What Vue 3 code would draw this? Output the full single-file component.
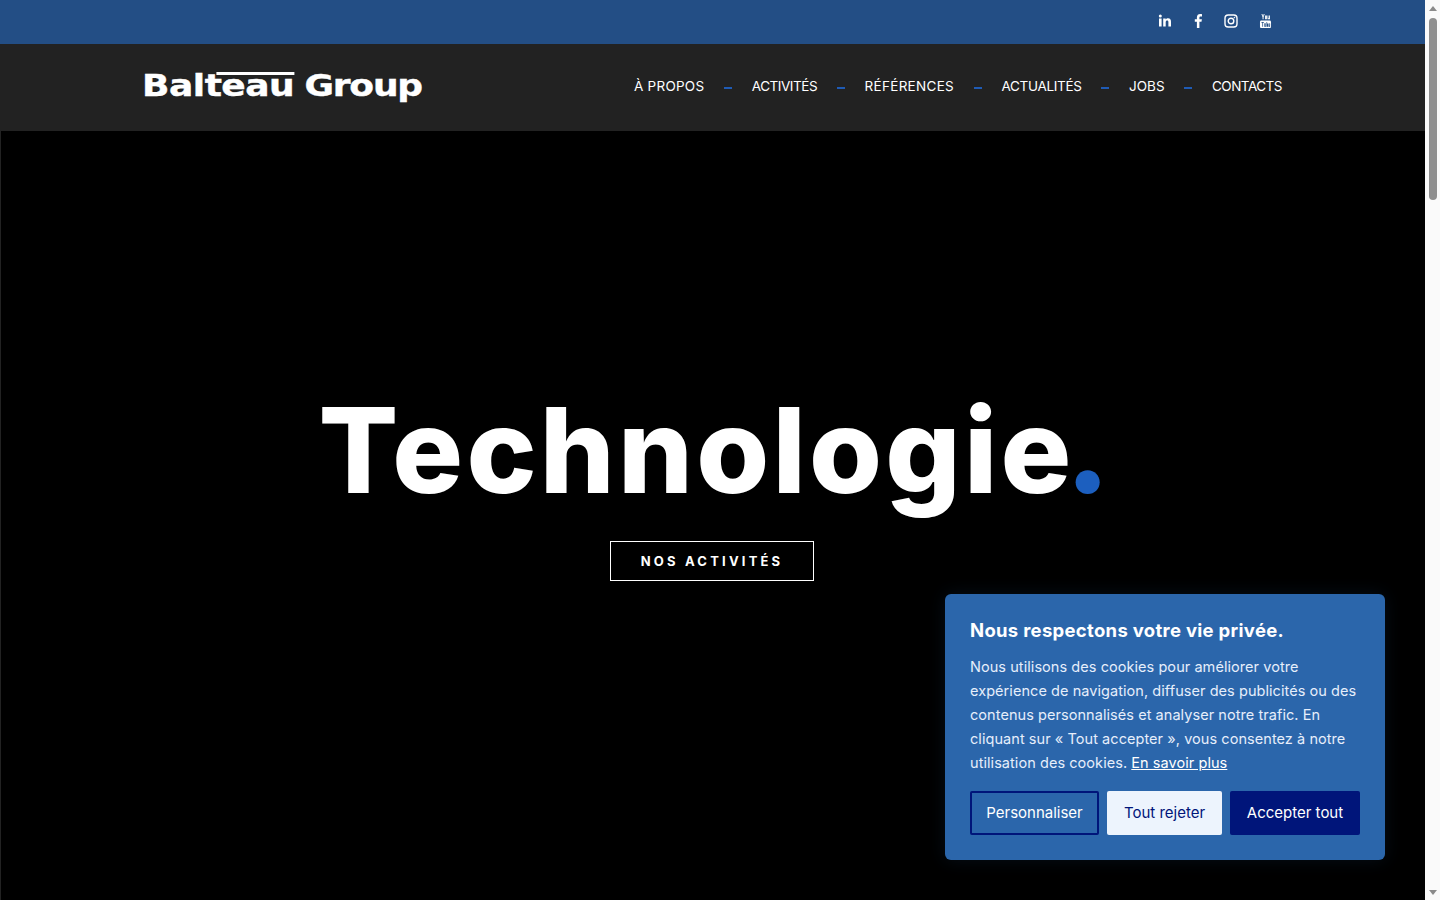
<script setup>
const nav = [
  { label: 'À PROPOS', ls: 0.25 },
  { label: 'ACTIVITÉS', ls: -0.45 },
  { label: 'RÉFÉRENCES', ls: 0.3 },
  { label: 'ACTUALITÉS', ls: -0.3 },
  { label: 'JOBS', ls: 0 },
  { label: 'CONTACTS', ls: -0.5 }
]
</script>

<template>
  <div class="page">
    <main class="main">
      <div class="topbar">
        <div class="socials">
          <svg class="ico" viewBox="0 0 16 16" fill="#fff"><rect x="2" y="5.5" width="2.6" height="8"/><circle cx="3.3" cy="3" r="1.5"/><path d="M6.2 5.5h2.5v1.1c.5-.8 1.4-1.3 2.4-1.3 2.1 0 2.9 1.3 2.9 3.4v4.8h-2.6V9.2c0-1-.3-1.7-1.2-1.7-1 0-1.5.7-1.5 1.7v4.3H6.2z"/></svg>
          <svg class="ico" viewBox="0 0 16 16" fill="#fff"><path d="M9.4 15V8.7h2.1l.4-2.5H9.4V4.7c0-.7.3-1.2 1.3-1.2H12V1.2C11.700 1.100 11 1 10.200 1 8.300 1 6.900 2.200 6.900 4.400v1.800H4.800v2.500h2.100V15z"/></svg>
          <svg class="ico" viewBox="0 0 16 16" fill="none" stroke="#fff" stroke-width="1.400"><rect x="2" y="2" width="12" height="12" rx="3.200"/><circle cx="8" cy="8" r="2.800"/><circle cx="11.400" cy="4.600" r=".5" fill="#fff" stroke-width=".5"/></svg>
          <svg class="ico yt" viewBox="0 0 16 16" preserveAspectRatio="none" fill="#fff"><path d="M3 1h1.200l.8 2.300L5.800 1H7L5.600 4.300V6.300H4.400V4.300zM7.500 2.600h2.200V6.200H7.500zM10.500 2.600h1.100V5.300h.8V2.600h1.100V6.200h-3z"/><path fill-rule="evenodd" d="M2.800 7.500h10.400c.9 0 1.600.7 1.600 1.600v4.300c0 .9-.7 1.600-1.600 1.600H2.800c-.9 0-1.600-.7-1.600-1.600V9.100c0-.9.700-1.600 1.600-1.600zM3 9v.8h1.100v4h.9v-4h1V9zM6.500 10.300v3.500h2v-3.500h-.8v2.800h-.4v-2.800zM9.200 9v4.800h1.900v-3.300H10V9zM11.700 10.500v3.300h2v-1.600h-1.200v-1h.5v.7h.7v-1.400z"/></svg>
        </div>
      </div>

      <header class="header">
        <div class="logo">
          <span class="logo-a">Balteau</span><span class="logo-b">Group</span>
        </div>
        <nav class="nav">
          <template v-for="(item, i) in nav" :key="item.label">
            <span v-if="i > 0" class="dash"></span>
            <a class="link" :style="{ letterSpacing: item.ls + 'px' }">{{ item.label }}</a>
          </template>
        </nav>
      </header>

      <section class="hero">
        <h1 class="title">Technologie<span class="dot">.</span></h1>
        <a class="cta">NOS ACTIVITÉS</a>

        <aside class="cookie">
          <h2 class="cookie-title">Nous respectons votre vie privée.</h2>
          <p class="cookie-text">Nous utilisons des cookies pour améliorer votre expérience de navigation, diffuser des publicités ou des contenus personnalisés et analyser notre trafic. En cliquant sur « Tout accepter », vous consentez à notre utilisation des cookies. <a class="more">En savoir plus</a></p>
          <div class="actions">
            <button class="btn ghost">Personnaliser</button>
            <button class="btn light">Tout rejeter</button>
            <button class="btn dark">Accepter tout</button>
          </div>
        </aside>
      </section>
    </main>

    <div class="scrollbar">
      <span class="arrow up"></span>
      <span class="thumb"></span>
      <span class="arrow down"></span>
    </div>
  </div>
</template>

<style>
html, body { margin: 0; overflow: hidden; background: #000; }
</style>

<style scoped>
.page { display: flex; width: 1440px; height: 900px; overflow: hidden; font-family: Inter, "Noto Sans", sans-serif; color: #fff; }
.main { width: 1425px; display: flex; flex-direction: column; }
.topbar { height: 44px; background: #234e85; display: flex; justify-content: flex-end; flex: none; }
.socials { display: flex; align-items: center; gap: 17px; padding: 0 153px 2px 0; }
.ico { width: 16px; height: 16px; display: block; }
.yt { width: 13px; margin-left: 3px; }
.header { height: 87px; flex: none; background: #222; display: flex; align-items: center; justify-content: space-between; padding: 0 143px 0 142px; }
.logo { display: flex; align-items: baseline; gap: 8.500px; padding-bottom: 3px; font-family: "DejaVu Sans", sans-serif; font-weight: 700; font-size: 30px; line-height: 32px; white-space: nowrap; transform: scaleX(1.2); transform-origin: left center; -webkit-text-stroke: .4px #fff; }
.logo-a { position: relative; letter-spacing: -0.4px; }
.logo-a::before { content: ""; position: absolute; left: 62px; right: 0; top: 2px; height: 3px; background: #fff; }
.logo-b { letter-spacing: -1px; }
.nav { display: flex; align-items: center; padding-bottom: 3px; }
.link { font-size: 13.500px; white-space: nowrap; color: #fff; }
.dash { width: 8px; height: 2px; margin: 3px 19.700px 0; background: #1f5bb5; }
.hero { position: relative; flex: 1; background: #000; border-left: 1px solid #222; display: flex; flex-direction: column; align-items: center; padding-top: 254px; box-sizing: border-box; }
.title { margin: 0 0 0 3px; font-size: 118px; line-height: 130px; font-weight: 800; color: #fff; letter-spacing: 3.200px; white-space: nowrap; }
.dot { color: #1c5fbf; font-size: 130px; line-height: 0; letter-spacing: 0; margin-left: -10px; }
.cta { margin: 26px 2px 0 0; width: 204px; height: 40px; box-sizing: border-box; border: 1px solid #fff; display: flex; align-items: center; justify-content: center; font-size: 13px; font-weight: 700; letter-spacing: 3.200px; }
.cookie { position: absolute; left: 944px; top: 463px; width: 440px; height: 266px; box-sizing: border-box; padding: 25px; background: #2b66ab; border-radius: 6px; box-shadow: 0 0 18px rgba(43, 102, 171, .15); }
.cookie-title { margin: 0; font-size: 18.500px; line-height: 22px; font-weight: 700; letter-spacing: .3px; }
.cookie-text { margin: 14px 0 0; font-size: 14.500px; line-height: 24px; color: #e6eefb; letter-spacing: .06px; }
.more { color: #fff; text-decoration: underline; }
.actions { display: flex; gap: 8px; margin-top: 16px; }
.btn { height: 44px; box-sizing: border-box; border-radius: 2px; font-family: inherit; font-size: 15px; padding: 0 0 2px; }
.ghost { width: 129px; background: transparent; border: 2px solid #00157a; color: #fff; }
.light { width: 115px; background: #edf4fd; border: 0; color: #00157a; }
.dark { width: 130px; background: #00157a; border: 0; color: #fff; }
.scrollbar { width: 15px; flex: none; background: #fafafa; display: flex; flex-direction: column; align-items: center; }
.arrow { width: 0; height: 0; border-left: 4px solid transparent; border-right: 4px solid transparent; flex: none; }
.up { margin-top: 6px; border-bottom: 5px solid #8a8a8a; }
.down { margin-top: auto; margin-bottom: 5px; border-top: 5px solid #8a8a8a; }
.thumb { width: 8px; height: 182px; margin-top: 7px; border-radius: 4px; background: #8f8f8f; }
</style>
